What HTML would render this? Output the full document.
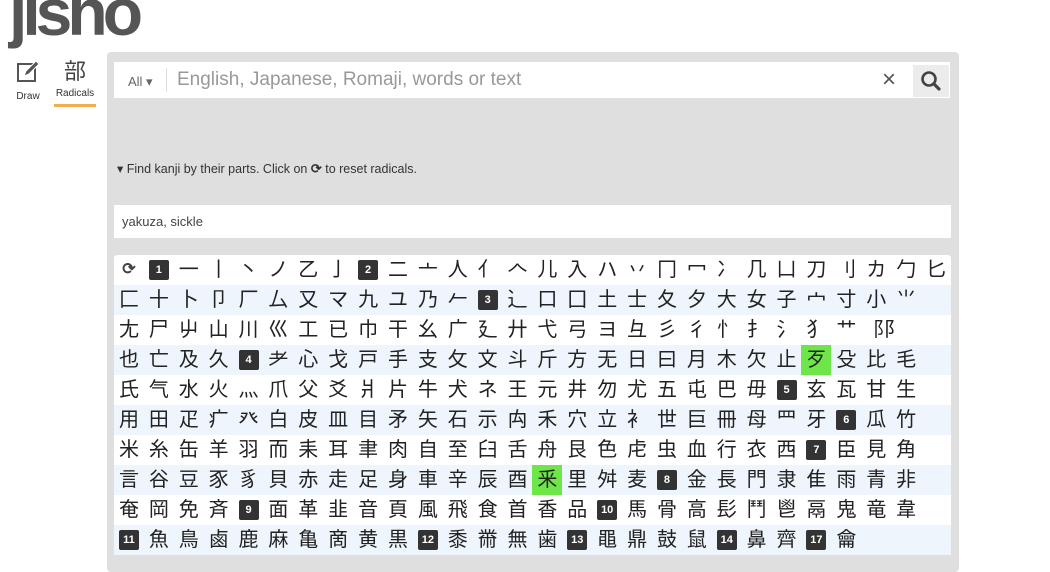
<!DOCTYPE html>
<html><head><meta charset="utf-8"><style>
*{box-sizing:border-box;margin:0;padding:0}
body{width:1050px;height:550px;overflow:hidden;background:#fff;font-family:"Liberation Sans","Noto Sans CJK JP",sans-serif;position:relative}
.logo{position:absolute;left:9px;top:-26px;font-size:66px;font-weight:bold;color:#555;letter-spacing:-5px}
.nav{position:absolute;top:60px;font-size:10px;color:#333;text-align:center}
.panel{position:absolute;left:107px;top:52px;width:852px;height:520px;background:#dfdfdf;border-radius:4px}
.search{position:absolute;left:114px;top:62px;width:836px;height:36px;background:#fff}
.all{position:absolute;left:14px;top:12px;font-size:13px;color:#666}
.sep{position:absolute;left:52px;top:6px;width:1px;height:24px;background:#ddd}
.ph{position:absolute;left:63px;top:7px;font-size:19px;color:#999}
.x{position:absolute;left:768px;top:4px;font-size:24px;color:#555}
.btn{position:absolute;left:799px;top:3px;width:36px;height:32px;background:#ececec}
.hint{position:absolute;left:117px;top:161px;font-size:12.5px;color:#333}
.inp{position:absolute;left:114px;top:205px;width:837px;height:33px;background:#fff;font-size:13px;color:#444;padding:9px 8px}
.grid{position:absolute;left:114px;top:255px;width:837px;height:300px;background:#fff;border-radius:3px}
.row{display:flex;height:30px;align-items:center;padding-left:-0px}
.row:nth-child(even){background:#eef5fc}
.c{width:29.9px;flex:none;text-align:center;font-size:20px;color:#222;line-height:30px;height:30px}
.n{width:29.9px;flex:none;display:flex;justify-content:center;align-items:center}
.n span{background:#333;color:#fff;font-size:11px;font-weight:bold;width:20px;height:20px;line-height:20px;text-align:center;border-radius:2px}
.g{background:#6ee64a}
</style></head><body>
<div class="logo">jisho</div>
<div class="nav" style="left:15px"><svg width="26" height="24" viewBox="0 0 26 24"><rect x="3" y="4" width="17" height="17" fill="none" stroke="#555" stroke-width="2"/><path d="M9 16l2-5 10-10 3 3-10 10z" fill="#555" stroke="#fff" stroke-width="1"/></svg><div style="margin-top:4px">Draw</div></div>
<div class="nav" style="left:54px;top:58px"><div style="font-size:22px;color:#444;line-height:28px">部</div><div style="margin-top:2px">Radicals</div><div style="width:42px;height:3px;background:#f0b050;margin-top:5px"></div></div>
<div class="panel"></div>
<div class="search"><div class="all">All ▾</div><div class="sep"></div><div class="ph">English, Japanese, Romaji, words or text</div><div class="x">×</div><div class="btn"><svg width="36" height="32" viewBox="0 0 36 32"><circle cx="16" cy="14" r="6.5" fill="none" stroke="#444" stroke-width="2.6"/><path d="M21 19l5 5" stroke="#444" stroke-width="3.2" stroke-linecap="round"/></svg></div></div>
<div class="hint">▾ Find kanji by their parts. Click on <b style="font-size:13px">⟳</b> to reset radicals.</div>
<div class="inp">yakuza, sickle</div>
<div class="grid">
<div class="row"><div class="c" style="font-size:16px;font-weight:bold;color:#444">⟳</div><div class="n"><span>1</span></div><div class="c">一</div><div class="c">丨</div><div class="c">丶</div><div class="c">ノ</div><div class="c">乙</div><div class="c">亅</div><div class="n"><span>2</span></div><div class="c">二</div><div class="c">亠</div><div class="c">人</div><div class="c">亻</div><div class="c">𠆢</div><div class="c">儿</div><div class="c">入</div><div class="c">ハ</div><div class="c">丷</div><div class="c">冂</div><div class="c">冖</div><div class="c">冫</div><div class="c">几</div><div class="c">凵</div><div class="c">刀</div><div class="c">刂</div><div class="c">カ</div><div class="c">勹</div><div class="c">匕</div></div>
<div class="row"><div class="c">匚</div><div class="c">十</div><div class="c">卜</div><div class="c">卩</div><div class="c">厂</div><div class="c">厶</div><div class="c">又</div><div class="c">マ</div><div class="c">九</div><div class="c">ユ</div><div class="c">乃</div><div class="c">𠂉</div><div class="n"><span>3</span></div><div class="c">⻌</div><div class="c">口</div><div class="c">囗</div><div class="c">土</div><div class="c">士</div><div class="c">夂</div><div class="c">夕</div><div class="c">大</div><div class="c">女</div><div class="c">子</div><div class="c">宀</div><div class="c">寸</div><div class="c">小</div><div class="c">⺌</div></div>
<div class="row"><div class="c">尢</div><div class="c">尸</div><div class="c">屮</div><div class="c">山</div><div class="c">川</div><div class="c">巛</div><div class="c">工</div><div class="c">已</div><div class="c">巾</div><div class="c">干</div><div class="c">幺</div><div class="c">广</div><div class="c">廴</div><div class="c">廾</div><div class="c">弋</div><div class="c">弓</div><div class="c">ヨ</div><div class="c">彑</div><div class="c">彡</div><div class="c">彳</div><div class="c">忄</div><div class="c">扌</div><div class="c">氵</div><div class="c">犭</div><div class="c">艹</div><div class="c" style="width:45px">⻏⻖</div></div>
<div class="row"><div class="c">也</div><div class="c">亡</div><div class="c">及</div><div class="c">久</div><div class="n"><span>4</span></div><div class="c">耂</div><div class="c">心</div><div class="c">戈</div><div class="c">戸</div><div class="c">手</div><div class="c">支</div><div class="c">攵</div><div class="c">文</div><div class="c">斗</div><div class="c">斤</div><div class="c">方</div><div class="c">无</div><div class="c">日</div><div class="c">曰</div><div class="c">月</div><div class="c">木</div><div class="c">欠</div><div class="c">止</div><div class="c g">歹</div><div class="c">殳</div><div class="c">比</div><div class="c">毛</div></div>
<div class="row"><div class="c">氏</div><div class="c">气</div><div class="c">水</div><div class="c">火</div><div class="c">灬</div><div class="c">爪</div><div class="c">父</div><div class="c">爻</div><div class="c">爿</div><div class="c">片</div><div class="c">牛</div><div class="c">犬</div><div class="c">ネ</div><div class="c">王</div><div class="c">元</div><div class="c">井</div><div class="c">勿</div><div class="c">尤</div><div class="c">五</div><div class="c">屯</div><div class="c">巴</div><div class="c">毋</div><div class="n"><span>5</span></div><div class="c">玄</div><div class="c">瓦</div><div class="c">甘</div><div class="c">生</div></div>
<div class="row"><div class="c">用</div><div class="c">田</div><div class="c">疋</div><div class="c">疒</div><div class="c">癶</div><div class="c">白</div><div class="c">皮</div><div class="c">皿</div><div class="c">目</div><div class="c">矛</div><div class="c">矢</div><div class="c">石</div><div class="c">示</div><div class="c">禸</div><div class="c">禾</div><div class="c">穴</div><div class="c">立</div><div class="c">衤</div><div class="c">世</div><div class="c">巨</div><div class="c">冊</div><div class="c">母</div><div class="c">罒</div><div class="c">牙</div><div class="n"><span>6</span></div><div class="c">瓜</div><div class="c">竹</div></div>
<div class="row"><div class="c">米</div><div class="c">糸</div><div class="c">缶</div><div class="c">羊</div><div class="c">羽</div><div class="c">而</div><div class="c">耒</div><div class="c">耳</div><div class="c">聿</div><div class="c">肉</div><div class="c">自</div><div class="c">至</div><div class="c">臼</div><div class="c">舌</div><div class="c">舟</div><div class="c">艮</div><div class="c">色</div><div class="c">虍</div><div class="c">虫</div><div class="c">血</div><div class="c">行</div><div class="c">衣</div><div class="c">西</div><div class="n"><span>7</span></div><div class="c">臣</div><div class="c">見</div><div class="c">角</div></div>
<div class="row"><div class="c">言</div><div class="c">谷</div><div class="c">豆</div><div class="c">豕</div><div class="c">豸</div><div class="c">貝</div><div class="c">赤</div><div class="c">走</div><div class="c">足</div><div class="c">身</div><div class="c">車</div><div class="c">辛</div><div class="c">辰</div><div class="c">酉</div><div class="c g">釆</div><div class="c">里</div><div class="c">舛</div><div class="c">麦</div><div class="n"><span>8</span></div><div class="c">金</div><div class="c">長</div><div class="c">門</div><div class="c">隶</div><div class="c">隹</div><div class="c">雨</div><div class="c">青</div><div class="c">非</div></div>
<div class="row"><div class="c">奄</div><div class="c">岡</div><div class="c">免</div><div class="c">斉</div><div class="n"><span>9</span></div><div class="c">面</div><div class="c">革</div><div class="c">韭</div><div class="c">音</div><div class="c">頁</div><div class="c">風</div><div class="c">飛</div><div class="c">食</div><div class="c">首</div><div class="c">香</div><div class="c">品</div><div class="n"><span>10</span></div><div class="c">馬</div><div class="c">骨</div><div class="c">高</div><div class="c">髟</div><div class="c">鬥</div><div class="c">鬯</div><div class="c">鬲</div><div class="c">鬼</div><div class="c">竜</div><div class="c">韋</div></div>
<div class="row"><div class="n"><span>11</span></div><div class="c">魚</div><div class="c">鳥</div><div class="c">鹵</div><div class="c">鹿</div><div class="c">麻</div><div class="c">亀</div><div class="c">啇</div><div class="c">黄</div><div class="c">黒</div><div class="n"><span>12</span></div><div class="c">黍</div><div class="c">黹</div><div class="c">無</div><div class="c">歯</div><div class="n"><span>13</span></div><div class="c">黽</div><div class="c">鼎</div><div class="c">鼓</div><div class="c">鼠</div><div class="n"><span>14</span></div><div class="c">鼻</div><div class="c">齊</div><div class="n"><span>17</span></div><div class="c">龠</div></div>
</div>
</body></html>
